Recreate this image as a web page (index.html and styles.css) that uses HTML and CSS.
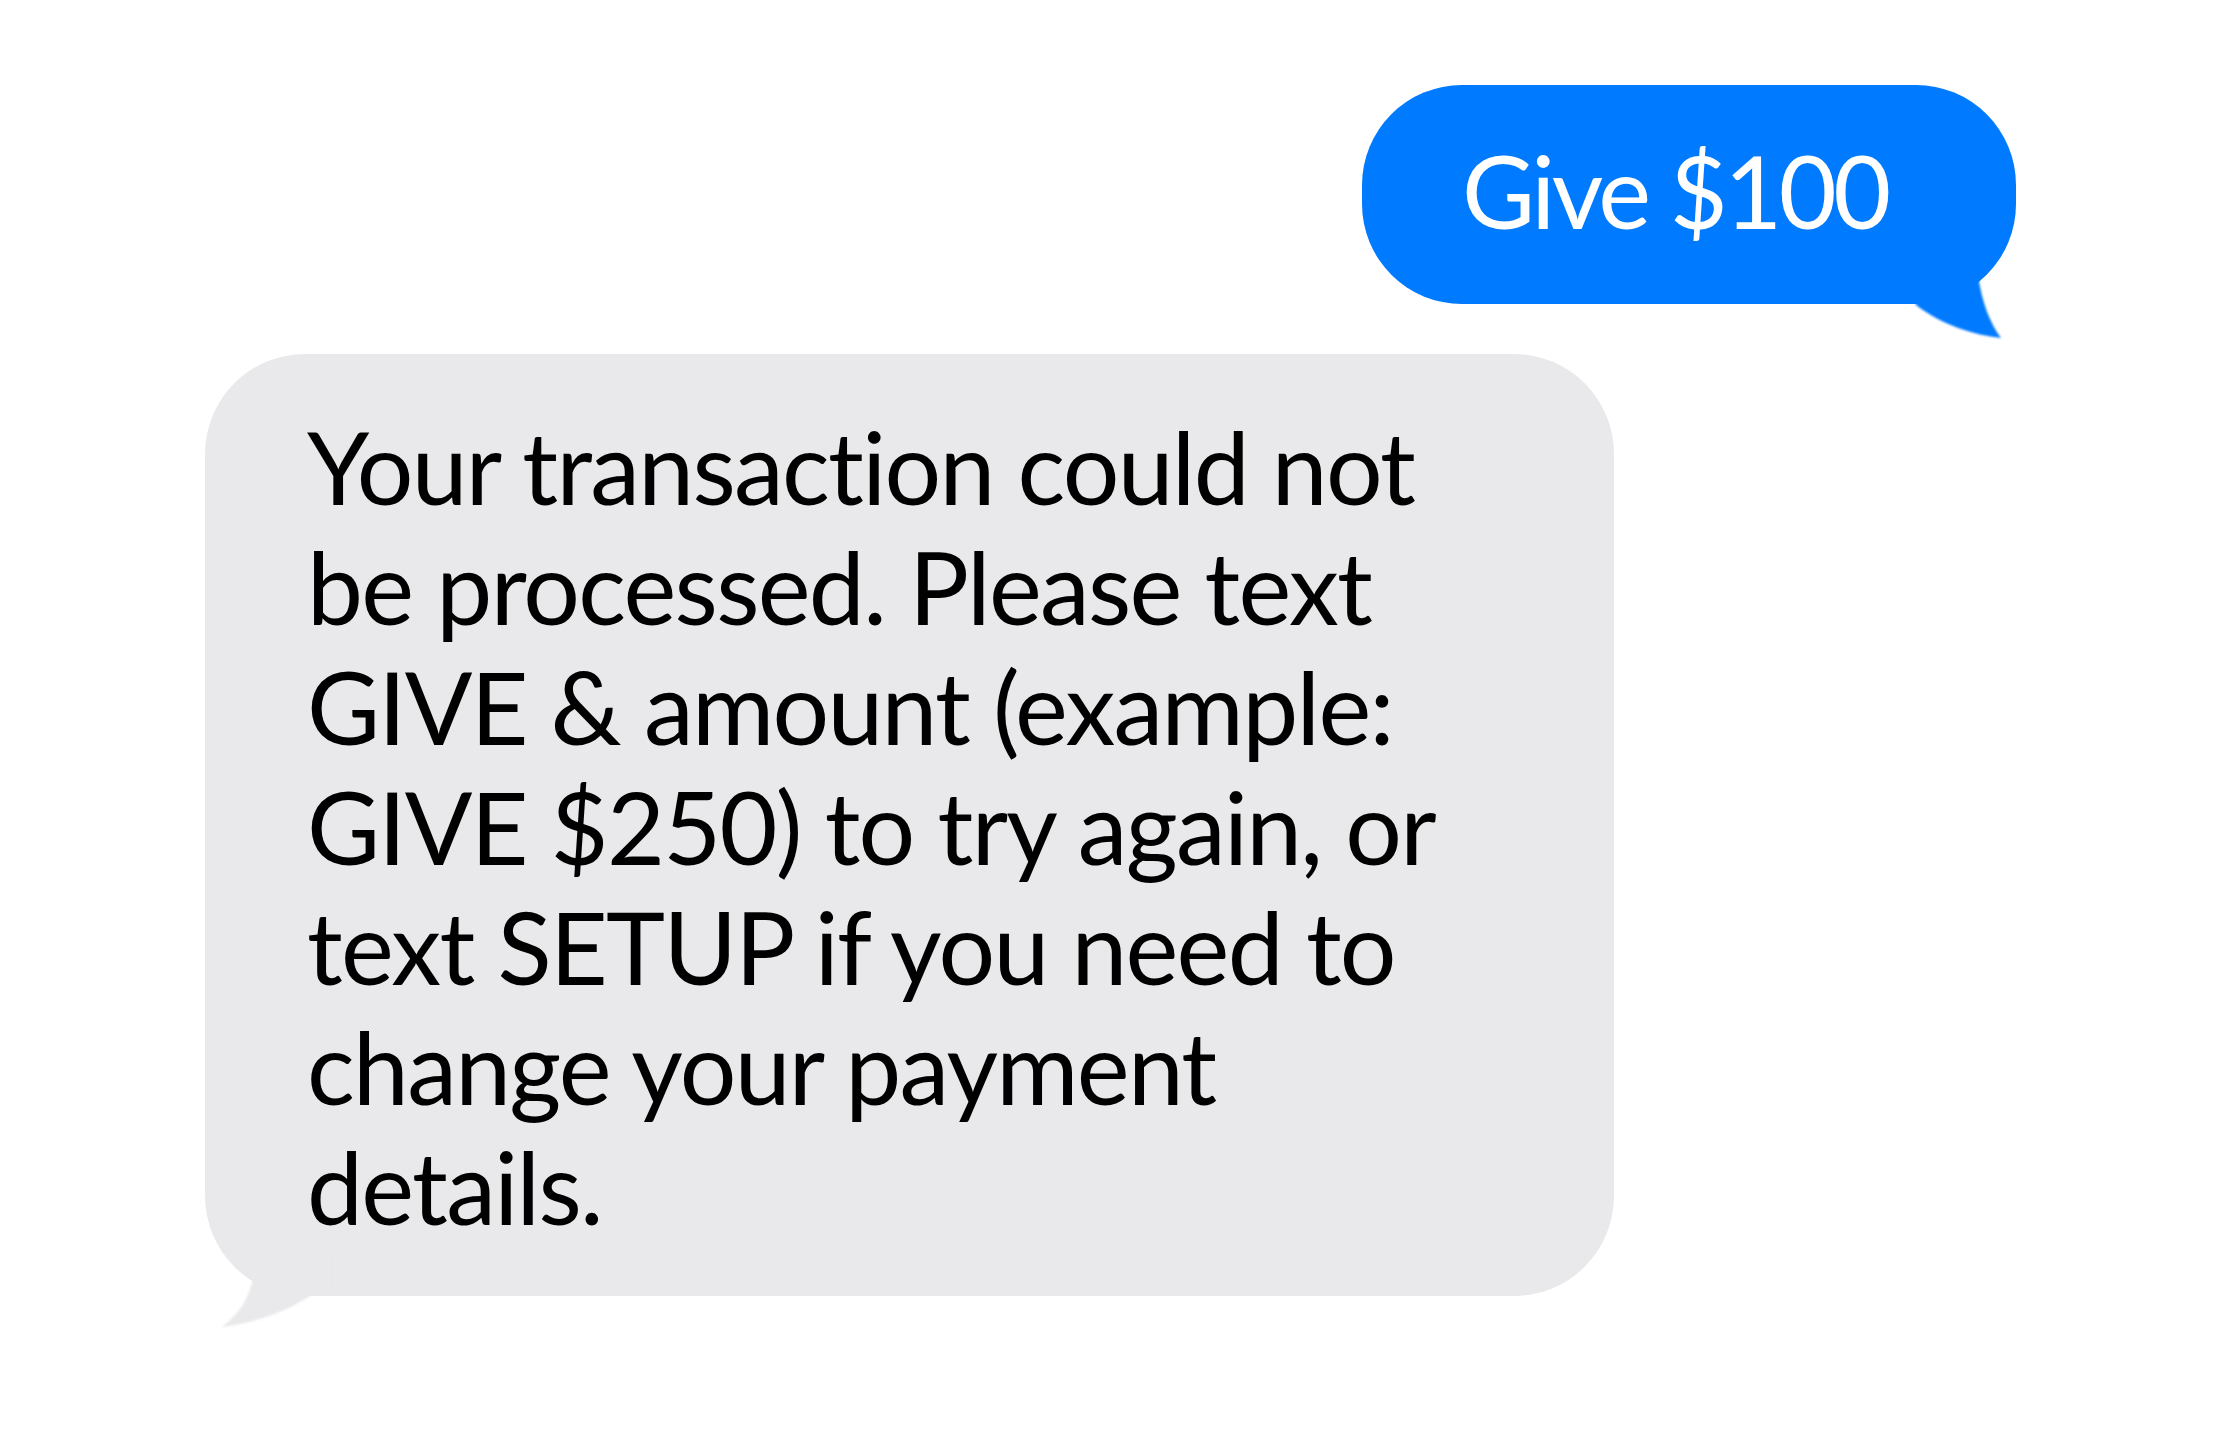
FILE: index.html
```html
<!DOCTYPE html>
<html lang="en">
<head>
<meta charset="utf-8">
<title>Messages</title>
<link rel="stylesheet" href="styles.css">
</head>
<body>
<main class="thread">
  <div class="bubble sent">
    <span class="msg">Give $100</span>
    <svg class="tail tail-sent" width="110" height="70" viewBox="0 0 110 70" aria-hidden="true">
      <path d="M8 0 L76 0 C80 28 88 48 99 63 C72 60 40 50 14 30 C12 20 10 10 8 0 Z" fill="#007aff"/>
    </svg>
  </div>
  <div class="bubble received">
    <p class="msg">Your transaction could not<br>be processed. Please text<br>GIVE &amp; amount (example:<br>GIVE $250) to try again, or<br>text SETUP if you need to<br>change your payment<br>details.</p>
    <svg class="tail tail-recv" width="130" height="80" viewBox="0 0 130 80" aria-hidden="true">
      <path d="M40 0 L125 0 L125 40 L108 40 C82 58 52 68 17 73 C34 60 44 45 48 24 Z" fill="#e9e9eb"/>
    </svg>
  </div>
</main>
</body>
</html>
```

FILE: styles.css
```css
html, body {
  margin: 0;
  padding: 0;
  background: #ffffff;
}

body {
  font-family: Lato, "Open Sans", "DejaVu Sans", sans-serif;
  width: 2220px;
  height: 1450px;
  overflow: hidden;
}

.thread {
  display: flex;
  flex-direction: column;
  padding: 85px 204px 0 205px;
  gap: 50px;
}

.bubble {
  position: relative;
  box-sizing: border-box;
  border-radius: 100px;
  font-size: 100px;
  line-height: 120px;
  font-variant-ligatures: none;
}

.sent {
  align-self: flex-end;
  width: 654px;
  height: 219px;
  padding: 45px 0 0 100px;
  background: #007aff;
  color: #ffffff;
}

.sent .msg {
  letter-spacing: -3.5px;
}

.received {
  align-self: flex-start;
  width: 1409px;
  padding: 52px 60px 50px 102px;
  background: #e9e9eb;
  color: #000000;
}

.msg {
  position: relative;
  z-index: 1;
  margin: 0;
  letter-spacing: -1.7px;
}

.tail {
  position: absolute;
  filter: blur(1px);
}

.tail-sent {
  left: 540px;
  top: 190px;
}

.tail-recv {
  left: 0;
  top: 900px;
}
```
